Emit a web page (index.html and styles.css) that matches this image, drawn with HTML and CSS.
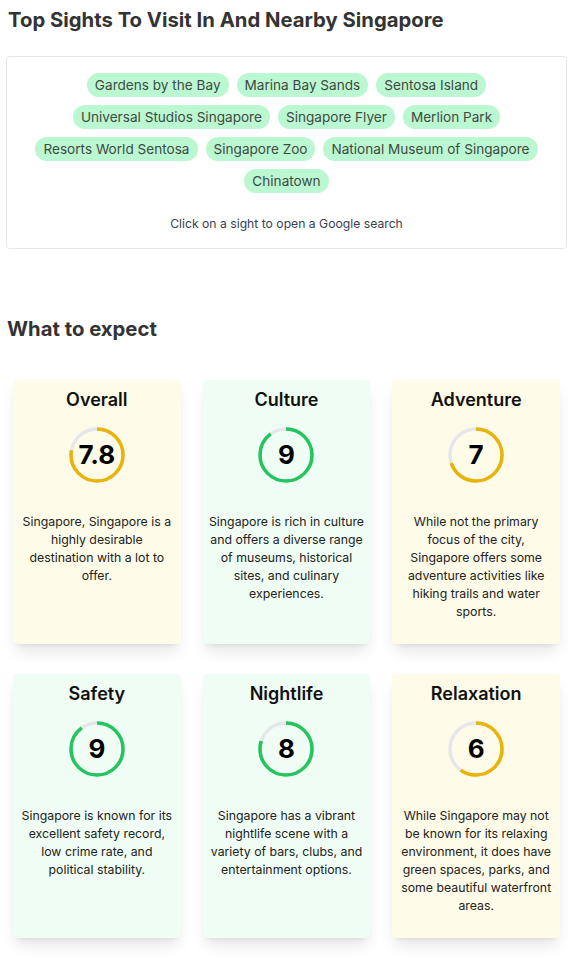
FILE: index.html
```html
<!DOCTYPE html>
<html>
<head>
<meta charset="utf-8">
<link rel="stylesheet" href="styles.css">
</head>
<body>
<div class="page">
  <h1 class="title">Top Sights To Visit In And Nearby Singapore</h1>
  <div class="sights">
    <div class="pills">
      <span class="pill">Gardens by the Bay</span>
      <span class="pill">Marina Bay Sands</span>
      <span class="pill">Sentosa Island</span>
      <span class="pill">Universal Studios Singapore</span>
      <span class="pill">Singapore Flyer</span>
      <span class="pill">Merlion Park</span>
      <span class="pill">Resorts World Sentosa</span>
      <span class="pill">Singapore Zoo</span>
      <span class="pill">National Museum of Singapore</span>
      <span class="pill">Chinatown</span>
    </div>
    <p class="hint">Click on a sight to open a Google search</p>
  </div>

  <h2 class="subtitle">What to expect</h2>
  <div class="cards">
    <div class="card yellow">
      <h3 class="card-title">Overall</h3>
      <div class="score">
        <svg viewBox="0 0 56 56" width="56" height="56"><circle class="track" cx="28" cy="28" r="26"/><circle class="bar" cx="28" cy="28" r="26" pathLength="100" style="stroke-dasharray:78 100"/></svg>
        <span class="num">7.8</span>
      </div>
      <p class="desc">Singapore, Singapore is a highly desirable destination with a lot to offer.</p>
    </div>
    <div class="card green">
      <h3 class="card-title">Culture</h3>
      <div class="score">
        <svg viewBox="0 0 56 56" width="56" height="56"><circle class="track" cx="28" cy="28" r="26"/><circle class="bar" cx="28" cy="28" r="26" pathLength="100" style="stroke-dasharray:90 100"/></svg>
        <span class="num">9</span>
      </div>
      <p class="desc">Singapore is rich in culture and offers a diverse range of museums, historical sites, and culinary experiences.</p>
    </div>
    <div class="card yellow">
      <h3 class="card-title">Adventure</h3>
      <div class="score">
        <svg viewBox="0 0 56 56" width="56" height="56"><circle class="track" cx="28" cy="28" r="26"/><circle class="bar" cx="28" cy="28" r="26" pathLength="100" style="stroke-dasharray:70 100"/></svg>
        <span class="num">7</span>
      </div>
      <p class="desc">While not the primary focus of the city, Singapore offers some adventure activities like hiking trails and water sports.</p>
    </div>
    <div class="card green">
      <h3 class="card-title">Safety</h3>
      <div class="score">
        <svg viewBox="0 0 56 56" width="56" height="56"><circle class="track" cx="28" cy="28" r="26"/><circle class="bar" cx="28" cy="28" r="26" pathLength="100" style="stroke-dasharray:90 100"/></svg>
        <span class="num">9</span>
      </div>
      <p class="desc">Singapore is known for its excellent safety record, low crime rate, and political stability.</p>
    </div>
    <div class="card green">
      <h3 class="card-title">Nightlife</h3>
      <div class="score">
        <svg viewBox="0 0 56 56" width="56" height="56"><circle class="track" cx="28" cy="28" r="26"/><circle class="bar" cx="28" cy="28" r="26" pathLength="100" style="stroke-dasharray:80 100"/></svg>
        <span class="num">8</span>
      </div>
      <p class="desc">Singapore has a vibrant nightlife scene with a variety of bars, clubs, and entertainment options.</p>
    </div>
    <div class="card yellow">
      <h3 class="card-title">Relaxation</h3>
      <div class="score">
        <svg viewBox="0 0 56 56" width="56" height="56"><circle class="track" cx="28" cy="28" r="26"/><circle class="bar" cx="28" cy="28" r="26" pathLength="100" style="stroke-dasharray:60 100"/></svg>
        <span class="num">6</span>
      </div>
      <p class="desc">While Singapore may not be known for its relaxing environment, it does have green spaces, parks, and some beautiful waterfront areas.</p>
    </div>
  </div>
</div>
</body>
</html>
```

FILE: styles.css
```css
* { box-sizing: border-box; }
html, body { margin: 0; padding: 0; background: #fff; }
body { font-family: Inter, "Noto Sans", sans-serif; color: #222; }
.page { padding: 6px 11px 20px 6px; }
.title {
  margin: 0 0 0 2px;
  font-size: 20.3px;
  line-height: 28px;
  font-weight: 700;
  color: #333;
}
.sights {
  margin-top: 22px;
  border: 1px solid #e5e7eb;
  border-radius: 4px;
  padding: 16px 16px 14px;
}
.pills {
  display: flex;
  flex-wrap: wrap;
  justify-content: center;
  gap: 8px;
}
.pill {
  background: #bbf7d0;
  color: #3f4a44;
  font-size: 13.6px;
  line-height: 24px;
  padding: 0 8px;
  border-radius: 12px;
}
.hint {
  margin: 21px 0 0;
  text-align: center;
  font-size: 12.2px;
  line-height: 20px;
  color: #374151;
}
.subtitle {
  margin: 66px 0 0 1px;
  font-size: 20.3px;
  line-height: 28px;
  font-weight: 700;
  color: #333;
}
.cards {
  margin-top: 37px;
  padding: 0 7px;
  display: grid;
  grid-template-columns: repeat(3, 1fr);
  column-gap: 22px;
  row-gap: 30px;
}
.card {
  min-height: 264px;
  border-radius: 4px;
  padding: 8px 5.5px 20px;
  text-align: center;
  box-shadow: 0 10px 15px -3px rgba(0,0,0,0.1), 0 4px 6px -4px rgba(0,0,0,0.1);
  display: flex;
  flex-direction: column;
  align-items: center;
}
.yellow { background: #fefbe8; }
.green { background: #f0fdf4; }
.green .bar { stroke: #22c55e; }
.yellow .bar { stroke: #eab308; }
.card-title {
  margin: 0;
  font-size: 18px;
  line-height: 24px;
  font-weight: 600;
  color: #111;
}
.score {
  margin-top: 15px;
  width: 56px;
  height: 56px;
  position: relative;
  display: flex;
  align-items: center;
  justify-content: center;
}
.score svg {
  position: absolute;
  inset: 0;
  transform: rotate(-90deg);
}
.track { fill: none; stroke: #e5e7eb; stroke-width: 3.5; }
.bar { fill: none; stroke-width: 3.5; }
.num {
  position: relative;
  font-size: 26px;
  font-weight: 700;
  color: #000;
  line-height: 1;
}
.desc {
  margin: 30px 0 0;
  font-size: 12.3px;
  line-height: 18px;
  color: #222;
}
```
